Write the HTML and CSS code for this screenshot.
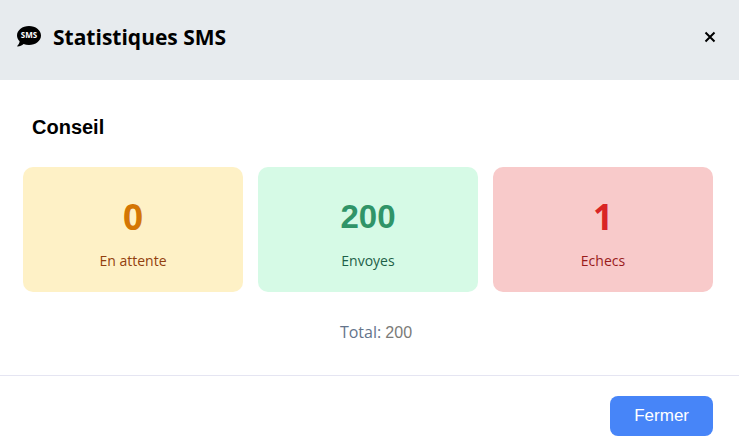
FILE: index.html
```html
<!DOCTYPE html>
<html lang="fr">
<head>
  <meta charset="UTF-8">
  <meta name="viewport" content="width=device-width, initial-scale=1.0">
  <title>Statistiques SMS</title>
  <link rel="stylesheet" href="styles.css">
</head>
<body>

<div class="modal" role="dialog" aria-labelledby="modal-title">
  <header class="modal-header">
    <svg class="icon" viewBox="0 0 24 22" aria-hidden="true">
      <path d="M12 0C18.600 0 24 4.200 24 9.500S18.600 19 12 19C10 19 8.200 18.700 6.600 18C5 19.600 2.800 20.500 .6 20.500C.2 20.500 .1 20.100 .4 19.800C1.600 18.600 2.500 16.900 2.600 15.300C.9 13.700 0 11.700 0 9.500C0 4.200 5.400 0 12 0Z"/>
      <text x="12" y="12" text-anchor="middle">SMS</text>
    </svg>
    <h1 id="modal-title">Statistiques SMS</h1>
    <button type="button" class="close" aria-label="Close">
      <svg viewBox="0 0 12 12" aria-hidden="true"><path d="M1.500 1.500L10.500 10.500M10.500 1.500L1.500 10.500"/></svg>
    </button>
  </header>

  <main class="modal-body">
    <h2>Conseil</h2>
    <div class="stats">
      <div class="card pending">
        <div class="number">0</div>
        <div class="label">En attente</div>
      </div>
      <div class="card sent">
        <div class="number arial">200</div>
        <div class="label">Envoyes</div>
      </div>
      <div class="card failed">
        <div class="number">1</div>
        <div class="label">Echecs</div>
      </div>
    </div>
    <p class="total">Total: <span>200</span></p>
  </main>

  <footer class="modal-footer">
    <button type="button" class="btn">Fermer</button>
  </footer>
</div>

</body>
</html>
```

FILE: styles.css
```css
* {
  box-sizing: border-box;
}
body {
  margin: 0;
  background-color: #fff;
  color: #000;
  font-family: "Segoe UI", "Open Sans", sans-serif;
}
h1, h2, p {
  margin: 0;
}
.modal-header {
  display: flex;
  align-items: center;
  height: 80px;
  padding: 0 23px 6px 17px;
  background-color: #e7ebee;
}
.icon {
  width: 24px;
  height: 22px;
  margin-right: 12px;
}
.icon text {
  fill: #fff;
  font: bold 8px "Open Sans", sans-serif;
}
h1 {
  flex: 1;
  font-size: 21px;
  line-height: 30px;
}
.close {
  display: flex;
  padding: 0;
  border: none;
  background: none;
  cursor: pointer;
}
.close svg {
  width: 12px;
  height: 12px;
  fill: none;
  stroke: #000;
  stroke-width: 2;
}
.modal-body {
  padding: 35px 26px 30px 23px;
}
h2 {
  margin: 0 9px 28px;
  font: bold 20px/24px "Liberation Sans", Arial, sans-serif;
}
.stats {
  display: grid;
  grid-template-columns: repeat(3, 1fr);
  gap: 15px;
}
.card {
  padding: 25px 20px 20px;
  border-radius: 10px;
  text-align: center;
}
.number {
  margin-bottom: 8px;
  font-size: 35px;
  font-weight: bold;
  line-height: 50px;
}
.number.arial {
  font-family: "Liberation Sans", Arial, sans-serif;
  font-size: 33px;
}
.label {
  font-size: 14px;
  line-height: 22px;
}
.pending {
  background-color: #fef1c6;
  color: #92400e;
}
.pending .number {
  color: #d47604;
}
.sent {
  background-color: #d6fae6;
  color: #1d6048;
}
.sent .number {
  color: #309468;
}
.failed {
  background-color: #f8caca;
  color: #991b1b;
}
.failed .number {
  color: #d92525;
}
.total {
  margin-top: 28px;
  padding-left: 16px;
  color: #64748b;
  font-size: 16px;
  line-height: 24px;
  text-align: center;
}
.total span {
  color: #7b7b78;
  font-family: "Liberation Sans", Arial, sans-serif;
}
.modal-footer {
  display: flex;
  justify-content: flex-end;
  padding: 20px 26px 10px;
  border-top: 1px solid #e5e5f2;
}
.btn {
  padding: 10px 24px;
  border: none;
  border-radius: 8px;
  background-color: #4785f8;
  color: #fff;
  font: 17px/20px "Liberation Sans", Arial, sans-serif;
  cursor: pointer;
}
.btn:hover {
  background-color: #2f6fe8;
}
```
